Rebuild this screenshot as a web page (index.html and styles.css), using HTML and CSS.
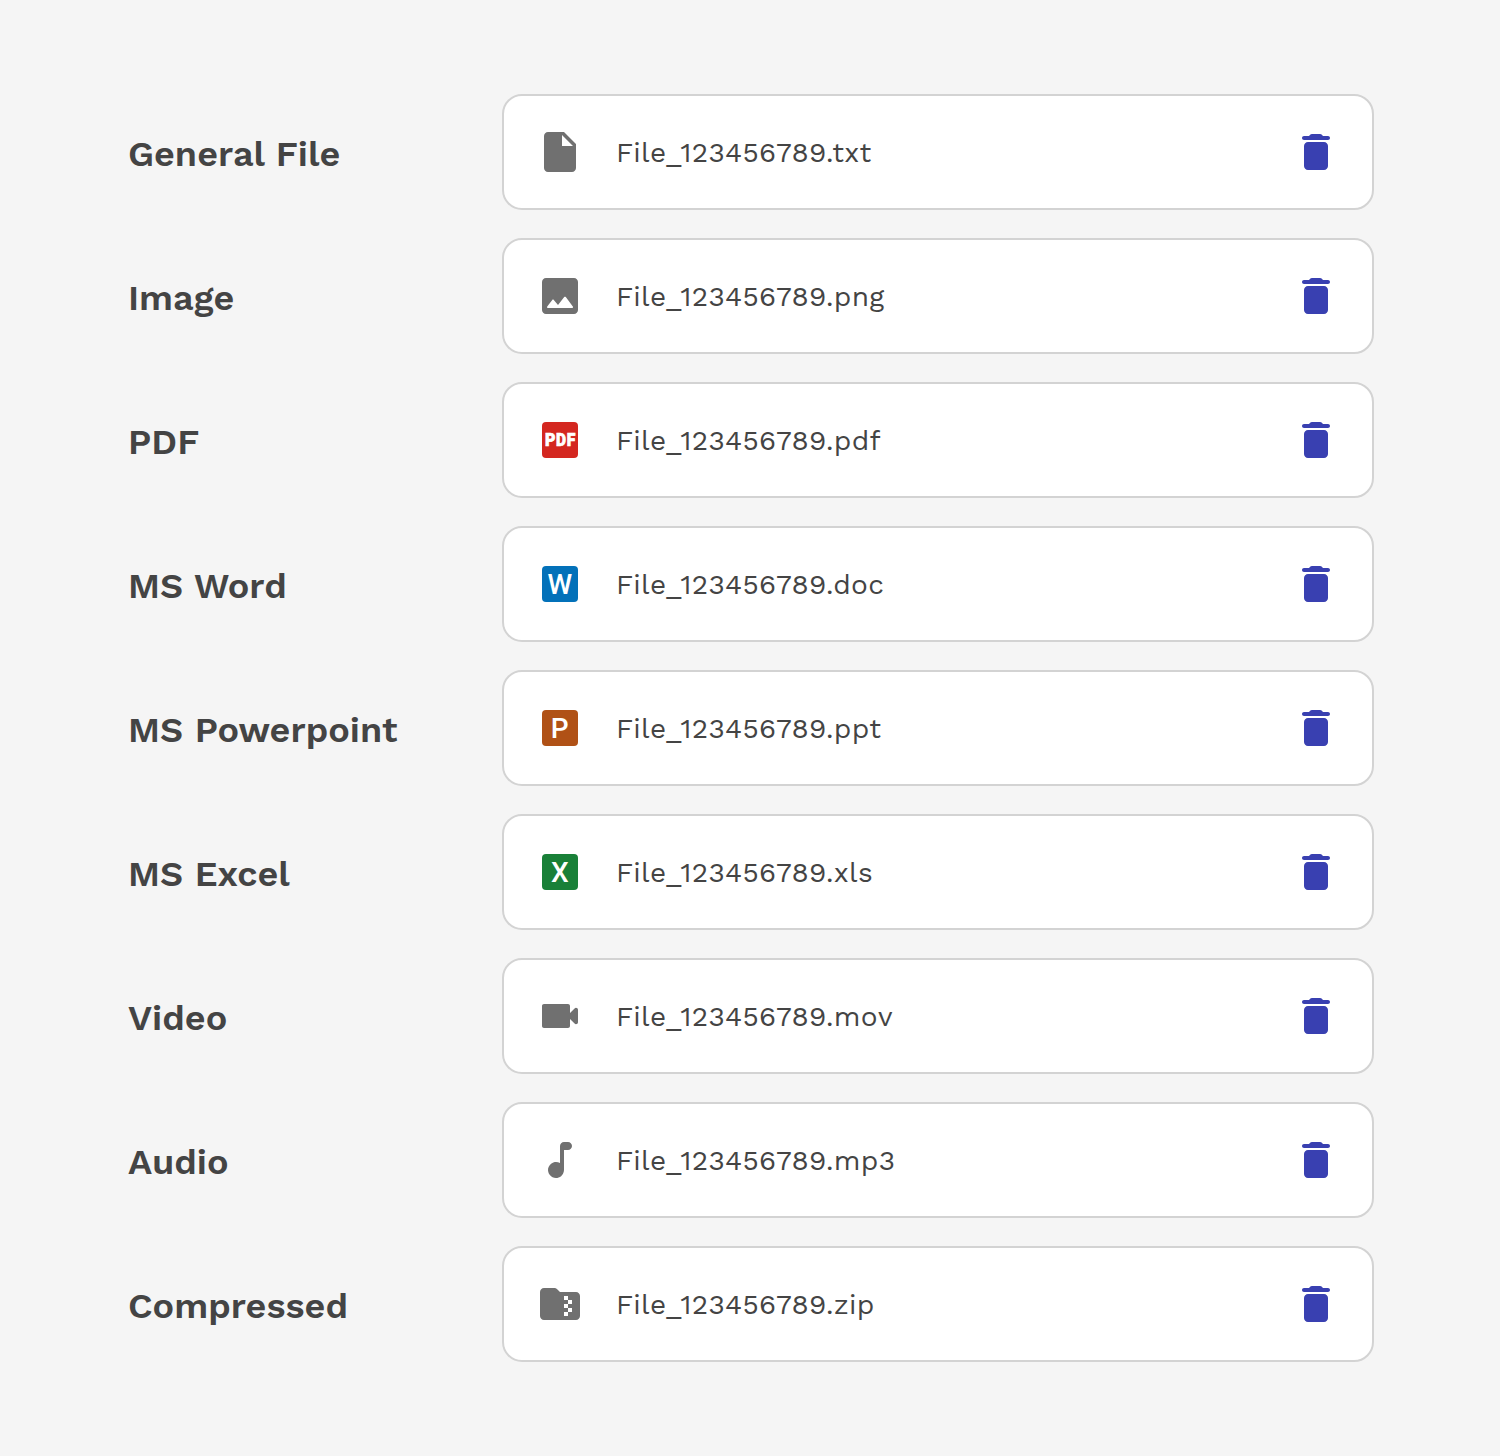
FILE: index.html
```html
<!DOCTYPE html>
<html lang="en">
<head>
<meta charset="utf-8">
<title>File types</title>
<link rel="stylesheet" href="styles.css">
</head>
<body>
<svg width="0" height="0" class="defs">
  <symbol id="trash" viewBox="0 0 24 24"><path d="M6 19c0 1.1.9 2 2 2h8c1.1 0 2-.9 2-2V9c0-1.1-.9-2-2-2H8c-1.1 0-2 .9-2 2v10zM18 4h-2.5l-.71-.71c-.18-.18-.44-.29-.7-.29H9.91c-.26 0-.52.11-.7.29L8.5 4H6c-.55 0-1 .45-1 1s.45 1 1 1h12c.55 0 1-.45 1-1s-.45-1-1-1z"/></symbol>
</svg>
<main class="list">
  <section class="row">
    <h2 class="label">General File</h2>
    <div class="card">
      <svg class="icon" viewBox="0 0 24 24"><path d="M14 2H6c-1.1 0-2 .9-2 2v16c0 1.1.9 2 2 2h12c1.1 0 2-.9 2-2V8l-6-6zm-1 7V3.5L18.5 9H13z"/></svg>
      <span class="name">File_123456789.txt</span>
      <svg class="icon delete"><use href="#trash"/></svg>
    </div>
  </section>
  <section class="row">
    <h2 class="label">Image</h2>
    <div class="card">
      <svg class="icon" viewBox="0 0 24 24"><path d="M21 19V5c0-1.1-.9-2-2-2H5c-1.1 0-2 .9-2 2v14c0 1.1.9 2 2 2h14c1.1 0 2-.9 2-2zM8.9 13.98l2.1 2.53 3.1-3.99c.2-.26.6-.26.8.01l3.51 4.68c.25.33.01.8-.4.8H6.02c-.42 0-.65-.48-.39-.81L8.12 14c.19-.26.57-.27.78-.02z"/></svg>
      <span class="name">File_123456789.png</span>
      <svg class="icon delete"><use href="#trash"/></svg>
    </div>
  </section>
  <section class="row">
    <h2 class="label">PDF</h2>
    <div class="card">
      <svg class="icon" viewBox="0 0 48 48"><rect class="pdf" x="6" y="6" width="36" height="36" rx="4"/><g class="glyph heavy"><text x="8.9" y="30.4" textLength="10.4" lengthAdjust="spacingAndGlyphs">P</text><text x="20" y="30.4" textLength="10" lengthAdjust="spacingAndGlyphs">D</text><text x="30.8" y="30.4" textLength="8.6" lengthAdjust="spacingAndGlyphs">F</text></g></svg>
      <span class="name">File_123456789.pdf</span>
      <svg class="icon delete"><use href="#trash"/></svg>
    </div>
  </section>
  <section class="row">
    <h2 class="label">MS Word</h2>
    <div class="card">
      <svg class="icon" viewBox="0 0 48 48"><rect class="doc" x="6" y="6" width="36" height="36" rx="4"/><text class="glyph letter" x="23.9" y="34">W</text></svg>
      <span class="name">File_123456789.doc</span>
      <svg class="icon delete"><use href="#trash"/></svg>
    </div>
  </section>
  <section class="row">
    <h2 class="label">MS Powerpoint</h2>
    <div class="card">
      <svg class="icon" viewBox="0 0 48 48"><rect class="ppt" x="6" y="6" width="36" height="36" rx="4"/><text class="glyph letter" x="23.6" y="34">P</text></svg>
      <span class="name">File_123456789.ppt</span>
      <svg class="icon delete"><use href="#trash"/></svg>
    </div>
  </section>
  <section class="row">
    <h2 class="label">MS Excel</h2>
    <div class="card">
      <svg class="icon" viewBox="0 0 48 48"><rect class="xls" x="6" y="6" width="36" height="36" rx="4"/><text class="glyph letter" x="23.9" y="34">X</text></svg>
      <span class="name">File_123456789.xls</span>
      <svg class="icon delete"><use href="#trash"/></svg>
    </div>
  </section>
  <section class="row">
    <h2 class="label">Video</h2>
    <div class="card">
      <svg class="icon" viewBox="0 0 24 24"><path d="M17 10.5V7c0-.55-.45-1-1-1H4c-.55 0-1 .45-1 1v10c0 .55.45 1 1 1h12c.55 0 1-.45 1-1v-3.5l2.29 2.29c.63.63 1.71.18 1.71-.71V8.91c0-.89-1.08-1.34-1.71-.71L17 10.5z"/></svg>
      <span class="name">File_123456789.mov</span>
      <svg class="icon delete"><use href="#trash"/></svg>
    </div>
  </section>
  <section class="row">
    <h2 class="label">Audio</h2>
    <div class="card">
      <svg class="icon" viewBox="0 0 24 24"><path d="M12 5v8.55c-.94-.54-2.1-.75-3.33-.32-1.34.48-2.37 1.67-2.61 3.07-.46 2.74 1.86 5.08 4.59 4.65 1.96-.31 3.35-2.11 3.35-4.1V7h2c1.1 0 2-.9 2-2s-.9-2-2-2h-2c-1.1 0-2 .9-2 2z"/></svg>
      <span class="name">File_123456789.mp3</span>
      <svg class="icon delete"><use href="#trash"/></svg>
    </div>
  </section>
  <section class="row">
    <h2 class="label">Compressed</h2>
    <div class="card">
      <svg class="icon" viewBox="0 0 24 24"><path d="M20 6h-8l-1.41-1.41C10.21 4.21 9.7 4 9.17 4H4c-1.1 0-2 .9-2 2v12c0 1.1.9 2 2 2h16c1.1 0 2-.9 2-2V8c0-1.1-.9-2-2-2zm-2 6h-2v2h2v2h-2v2h-2v-2h2v-2h-2v-2h2v-2h-2V8h2v2h2v2z"/></svg>
      <span class="name">File_123456789.zip</span>
      <svg class="icon delete"><use href="#trash"/></svg>
    </div>
  </section>
</main>
</body>
</html>
```
FILE: styles.css
```css
* { box-sizing: border-box; }

body {
  margin: 0;
  background: #f5f5f5;
  color: #444;
  font-family: "Work Sans", Inter, "Liberation Sans", sans-serif;
}

.defs { display: none; }

.list {
  display: flex;
  flex-direction: column;
  gap: 28px;
  padding: 94px 126px 94px 128px;
}

.row {
  display: grid;
  grid-template-columns: 374px 872px;
  align-items: center;
}

.label {
  margin: 0;
  padding-top: 4px;
  font-size: 36px;
  font-weight: 600;
  line-height: 40px;
  word-spacing: 0.5px;
  white-space: nowrap;
}

.card {
  display: flex;
  align-items: center;
  height: 116px;
  padding: 0 32px;
  border: 2px solid #d3d3d3;
  border-radius: 20px;
  background: #fff;
}

.icon {
  flex: none;
  width: 48px;
  height: 48px;
  fill: #707070;
}

.name {
  flex: 1;
  margin-left: 32px;
  padding-top: 2px;
  font-size: 28px;
  line-height: 32px;
  letter-spacing: 0.01em;
  white-space: nowrap;
}

.delete { fill: #3940b1; }

.pdf { fill: #d42720; }
.doc { fill: #0371b9; }
.ppt { fill: #b05116; }
.xls { fill: #198038; }

.glyph {
  fill: #fff;
  font-family: Roboto, "Liberation Sans", sans-serif;
}

.letter {
  font-size: 28px;
  font-weight: 500;
  text-anchor: middle;
}

.heavy {
  font-size: 17.6px;
  font-weight: 900;
  stroke: #fff;
  stroke-width: 0.7px;
}
```
